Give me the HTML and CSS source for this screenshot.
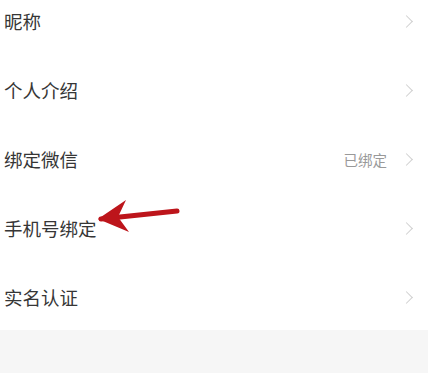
FILE: index.html
```html
<!DOCTYPE html>
<html lang="zh-CN">
<head>
    <meta charset="UTF-8">
    <meta name="viewport" content="width=device-width, initial-scale=1.0">
    <title>个人资料</title>
    <link rel="stylesheet" href="styles.css">
</head>
<body>
    <div class="list">
        <div class="row">
            <span class="label">昵称</span>
            <span class="chev"></span>
        </div>
        <div class="row">
            <span class="label">个人介绍</span>
            <span class="chev"></span>
        </div>
        <div class="row">
            <span class="label">绑定微信</span>
            <span class="value">已绑定</span>
            <span class="chev"></span>
        </div>
        <div class="row">
            <span class="label">手机号绑定</span>
            <span class="chev"></span>
            <!-- 标注箭头 -->
            <svg class="mark" width="90" height="42" viewBox="0 0 90 42">
                <path d="M6 24 L82 16" stroke="#bd151b" stroke-width="5" stroke-linecap="round" fill="none"/>
                <path d="M3 24 L31 5 L23 22 L34 37 Z" fill="#bd151b"/>
            </svg>
        </div>
        <div class="row">
            <span class="label">实名认证</span>
            <span class="chev"></span>
        </div>
    </div>
    <div class="bottom"></div>
</body>
</html>
```

FILE: styles.css
```css
body{
    margin: 0;
    font-family: "Noto Sans CJK SC", "Noto Sans", sans-serif;
    background-color: #f6f6f6;
    color: #363636;
    overflow: hidden;
}
.list{
    background: #fff;
    margin-top: -13px;
    height: 343px;
}
.row{
    position: relative;
    display: flex;
    align-items: center;
    height: 69px;
    padding: 0 15px 0 4px;
}
.label{
    flex: 1;
    font-size: 18.5px;
    line-height: 1;
}
.value{
    font-size: 14.5px;
    color: #999;
    margin-right: 15px;
}
.chev{
    width: 8px;
    height: 8px;
    border-top: 1.3px solid #d0d0d0;
    border-right: 1.3px solid #d0d0d0;
    transform: rotate(45deg);
    margin-right: 2px;
}
.mark{
    position: absolute;
    left: 95px;
    top: 1px;
}
.bottom{
    height: 60px;
}
```
